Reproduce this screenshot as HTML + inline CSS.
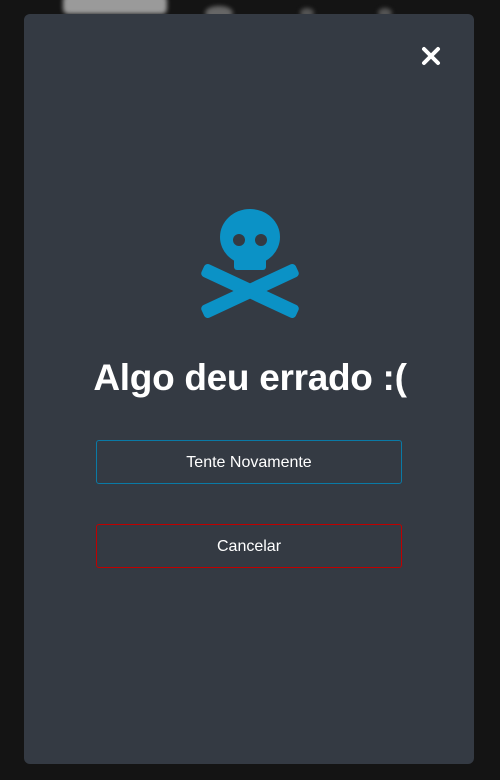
<!DOCTYPE html>
<html><head><style>
body{margin:0;width:500px;height:780px;background:#141414;position:relative;overflow:hidden;font-family:"Liberation Sans",sans-serif}
.blur{position:absolute;background:#9a9a9a;filter:blur(2px)}
.modal{position:absolute;left:24px;top:14px;width:450px;height:750px;background:#343a43;border-radius:6px}
.x{position:absolute;left:420px;top:45px}
h1{position:absolute;left:0;width:500px;top:357px;margin:0;text-align:center;color:#fff;font-size:37px;font-weight:bold;letter-spacing:-0.3px}
.btn{position:absolute;left:96px;width:304px;height:42px;border-radius:3px;color:#fff;font-size:16px;line-height:44px;text-align:center}
</style></head><body>
<div class="blur" style="left:63px;top:-5px;width:104px;height:19px;border-radius:5px"></div>
<div class="blur" style="left:205px;top:6px;width:28px;height:14px;border-radius:50%;background:#666"></div>
<div class="blur" style="left:300px;top:8px;width:14px;height:10px;border-radius:50%;background:#555"></div>
<div class="blur" style="left:378px;top:8px;width:14px;height:10px;border-radius:50%;background:#555"></div>
<div class="modal"></div>
<svg class="x" width="22" height="22" viewBox="0 0 22 22"><path d="M4 4L18 18M18 4L4 18" stroke="#fff" stroke-width="4" stroke-linecap="round"/></svg>
<svg style="position:absolute;left:0;top:0" width="500" height="780">
<g fill="#0b92c6">
<ellipse cx="250" cy="237" rx="30" ry="28"/>
<rect x="234" y="250" width="32" height="20" rx="3"/>
<g transform="rotate(25 250 291)"><rect x="198" y="284" width="104" height="14" rx="4"/></g>
<g transform="rotate(-25 250 291)"><rect x="198" y="284" width="104" height="14" rx="4"/></g>
</g>
<circle cx="239" cy="240" r="6" fill="#343a43"/>
<circle cx="261" cy="240" r="6" fill="#343a43"/>
</svg>
<h1>Algo deu errado :(</h1>
<div class="btn" style="top:440px;border:1px solid #0a7aa6">Tente Novamente</div>
<div class="btn" style="top:524px;border:1px solid #c00000">Cancelar</div>
</body></html>
